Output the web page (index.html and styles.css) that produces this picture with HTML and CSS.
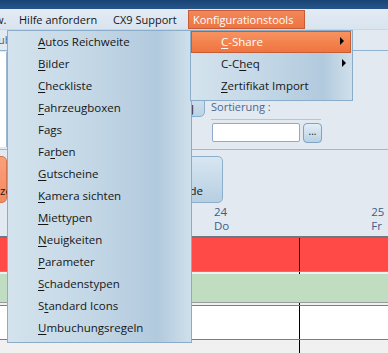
FILE: index.html
```html
<!DOCTYPE html>
<html lang="de">
<head>
  <meta charset="UTF-8">
  <title>Konfigurationstools</title>
  <link rel="stylesheet" href="styles.css">
</head>
<body>
  <div class="window">
    <div class="titlebar"></div>
    <div class="menubar">
      <span class="menu-item m-cut">w.</span>
      <span class="menu-item m-help">Hilfe anfordern</span>
      <span class="menu-item m-support">CX9 Support</span>
      <span class="menu-item m-config active">Konfigurationstools</span>
    </div>

    <div class="workspace">
      <div class="tabstrip"><span class="tab">ub</span></div>
      <div class="toolbar">
        <div class="side-box"></div>
        <div class="tool-left"><div class="small-btn">J</div></div>
        <div class="filter">
          <div class="filter-label">Sortierung :</div>
          <div class="filter-row">
            <div class="textbox"></div>
            <div class="dots">...</div>
          </div>
        </div>
      </div>
      <div class="actions">
        <div class="big-btn orange">ze</div>
        <div class="big-btn blue">de</div>
      </div>
      <div class="days">
        <div class="day first"><div>24</div><div>Do</div></div>
        <div class="day second"><div>25</div><div>Fr</div></div>
      </div>
      <div class="timeline">
        <div class="row red"></div>
        <div class="row green"></div>
        <div class="row white"></div>
      </div>
    </div>

    <!-- open menus lie over the window -->
    <div class="dropdown main-menu">
      <div class="entry"><u>A</u>utos Reichweite</div>
      <div class="entry"><u>B</u>ilder</div>
      <div class="entry"><u>C</u>heckliste</div>
      <div class="entry"><u>F</u>ahrzeugboxen</div>
      <div class="entry">Fa<u>g</u>s</div>
      <div class="entry">Fa<u>r</u>ben</div>
      <div class="entry"><u>G</u>utscheine</div>
      <div class="entry"><u>K</u>amera sichten</div>
      <div class="entry"><u>M</u>iettypen</div>
      <div class="entry"><u>N</u>euigkeiten</div>
      <div class="entry"><u>P</u>arameter</div>
      <div class="entry"><u>S</u>chadenstypen</div>
      <div class="entry">S<u>t</u>andard Icons</div>
      <div class="entry"><u>U</u>mbuchungsregeln</div>
    </div>
    <div class="dropdown sub-menu">
      <div class="entry hot"><u>C</u>-Share<span class="arrow"></span></div>
      <div class="entry">C-C<u>h</u>eq<span class="arrow"></span></div>
      <div class="entry"><u>Z</u>ertifikat Import</div>
    </div>
  </div>
</body>
</html>
```

FILE: styles.css
```css
body {
  margin: 0;
  font-family: "Open Sans", "Noto Sans", sans-serif;
  font-size: 11px;
  color: #161616;
  background: #e2e9f1;
}
.window {
  position: relative;
  width: 388px;
  height: 353px;
  overflow: hidden;
}
.titlebar {
  height: 9px;
  background: linear-gradient(#1a4374, #27558a);
}
.menubar {
  display: flex;
  height: 20px;
  align-items: center;
  background: linear-gradient(#e3ebf4, #d9e4ef);
  margin-left: -11px;
}
.menu-item {
  box-sizing: border-box;
  padding-left: 5px;
  line-height: 17px;
  border: 1px solid transparent;
  white-space: nowrap;
}
.m-cut { width: 24px; }
.m-help { width: 94px; }
.m-support { width: 81px; }
.m-config {
  width: 117px;
  padding-left: 4px;
}
.menu-item.active {
  color: #fff;
  background: linear-gradient(#f2875a, #ee7442);
  border-color: #c65c33;
}
.workspace {
  background: #e2e9f1;
}
.tabstrip {
  height: 20px;
  border-top: 1px solid #c9d7e5;
  border-bottom: 1px solid #8fb3d3;
}
.tab {
  display: inline-block;
  margin-left: -2px;
  padding: 2px 1px 0 0;
  color: #4a6588;
  border-right: 1px solid #b0c4d8;
  height: 16px;
}
.toolbar {
  display: flex;
  height: 98px;
  border-bottom: 1px solid #9fb7cf;
}
.side-box {
  width: 4px;
  margin: 1px 0 2px;
  background: #fff;
  border-left: 2px solid #fff;
  border-right: 1px solid #9ab6d1;
}
.tool-left {
  width: 198px;
  position: relative;
}
.small-btn {
  position: absolute;
  right: 0;
  top: 34px;
  width: 60px;
  height: 32px;
  box-sizing: border-box;
  padding: 15px 10px 0 0;
  text-align: right;
  border: 1px solid #8aaecd;
  border-radius: 0 0 5px 0;
  background: linear-gradient(#dbe8f2, #bcd3e4);
}
.filter {
  margin-left: 6px;
  padding-top: 49px;
}
.filter-label {
  color: #4a6890;
  line-height: 14px;
  padding-bottom: 5px;
  border-bottom: 1px solid #b3c6d8;
  width: 110px;
}
.filter-row {
  display: flex;
  gap: 3px;
  margin-top: 3px;
}
.textbox {
  width: 86px;
  height: 17px;
  background: #fff;
  border: 1px solid #8eaac6;
  border-radius: 2px;
  margin-left: 1px;
}
.dots {
  width: 17px;
  height: 18px;
  line-height: 15px;
  text-align: center;
  border: 1px solid #7fa3c4;
  border-radius: 4px;
  background: linear-gradient(#e4eef6, #b9d1e3);
  font-size: 10px;
}
.actions {
  display: flex;
  justify-content: space-between;
  height: 55px;
  padding-top: 6px;
  box-sizing: border-box;
  width: 223px;
}
.big-btn {
  height: 47px;
  box-sizing: border-box;
  padding-top: 26px;
  border-radius: 5px;
  font-size: 11.5px;
}
.big-btn.orange {
  width: 40px;
  margin-left: -33px;
  padding-left: 32px;
  background: linear-gradient(#fba07a, #f58a5f);
  border: 1px solid #d0764f;
}
.big-btn.blue {
  width: 60px;
  padding-right: 19px;
  text-align: right;
  background: linear-gradient(#d7e6f1, #b7cfe2);
  border: 1px solid #8cafcd;
}
.days {
  display: flex;
  height: 31px;
  color: #3b5e8a;
  font-size: 11.5px;
  line-height: 14px;
}
.day.first {
  margin-left: 214px;
}
.day.second {
  margin-left: 142px;
}
.timeline {
  height: 120px;
  background: linear-gradient(to right, transparent 299px, #000 299px, #000 300px, transparent 300px), #f0f0f0;
}
.row {
  box-sizing: border-box;
}
.row.red {
  height: 36px;
  border-top: 2px solid #6e7884;
  border-bottom: 1px solid #7a96b3;
  background: linear-gradient(to right, transparent 299px, #000 299px, #000 300px, transparent 300px), #ff4a47;
  margin-bottom: 2px;
}
.row.green {
  height: 29px;
  background: #c0dcc1;
  border-bottom: 1px solid #9a9a9a;
  margin-bottom: 2px;
}
.row.white {
  height: 35px;
  border-top: 1px solid #7d7d7d;
  border-bottom: 1px solid #7d7d7d;
  background: linear-gradient(to right, transparent 299px, #000 299px, #000 300px, transparent 300px), #fff;
}
.dropdown {
  position: absolute;
  top: 30px;
  box-sizing: border-box;
  border: 1px solid #88acca;
  background: linear-gradient(to right, #d4e3ed 0%, #c3d7e6 45%, #b2cade 82%, #cfe0ea 100%);
  font-size: 11.5px;
}
.main-menu {
  left: 7px;
  width: 185px;
  height: 313px;
}
.sub-menu {
  left: 190px;
  width: 163px;
  height: 71px;
}
.entry {
  display: flex;
  align-items: center;
  box-sizing: border-box;
  height: 22px;
  padding: 0 0 2px 30px;
}
.entry u {
  text-underline-offset: 2px;
}
.entry.hot {
  color: #fff;
  margin-right: 1px;
  padding-left: 29px;
  background: linear-gradient(#f7925f, #ef7440);
  border: 1px solid #c45d33;
}
.arrow {
  margin-left: auto;
  margin-right: 6px;
  border-left: 4px solid #000;
  border-top: 4px solid transparent;
  border-bottom: 4px solid transparent;
}
```
